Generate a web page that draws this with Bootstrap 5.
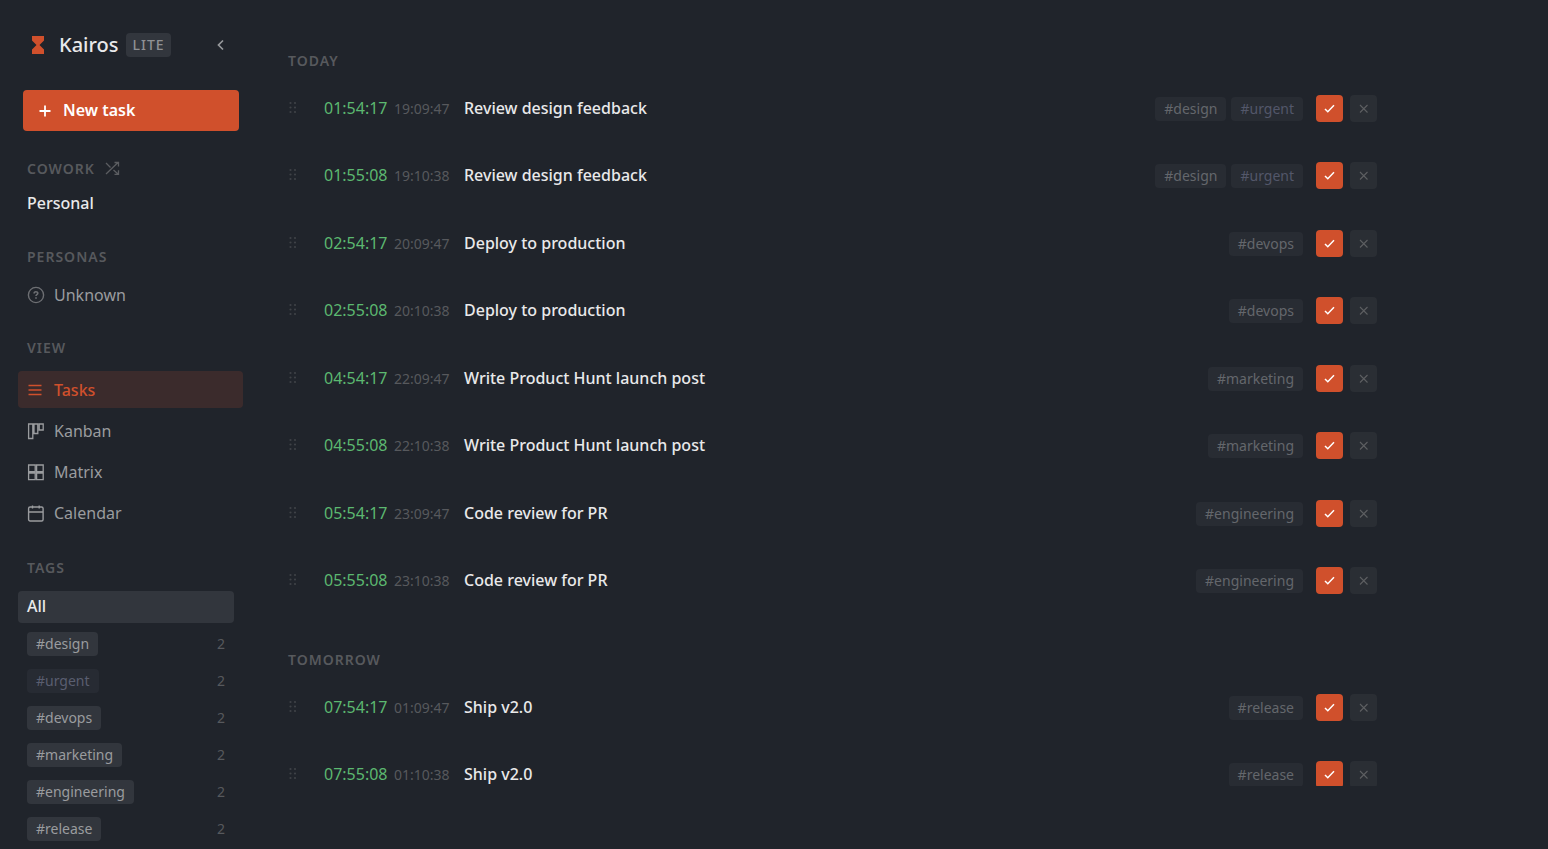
<!DOCTYPE html>
<html lang="en">
<head>
<meta charset="utf-8">
<meta name="viewport" content="width=device-width, initial-scale=1">
<title>Kairos</title>
<link href="https://cdn.jsdelivr.net/npm/bootstrap@5.3.0/dist/css/bootstrap.min.css" rel="stylesheet">
<style>
  :root { --bg:#20242b; --accent:#d0502c; --text:#e9e9ea; --soft:#9a9c9f; --dim:#57595d; --chip:#32363d; }
  body { background:var(--bg); color:var(--text); font-family:"Noto Sans",sans-serif; font-size:16px; line-height:22px; }
  .app { height:100vh; overflow:hidden; }
  .side { width:261px; padding:29px 18px 0; }
  .brand-row { height:32px; padding:0 9px 0 11px; }
  .brand-name { font-size:20px; font-weight:500; line-height:32px; margin:0 8px 0 12px; }
  .lite { background:var(--chip); color:#8f9194; font-size:14px; font-weight:500; line-height:24px; border-radius:4px; padding:0 6px; letter-spacing:1px; }
  .plain { background:none; border:0; padding:0; display:flex; color:inherit; }
  .collapse-btn { color:#97999c; margin-right:7px; }
  .new-task { background:var(--accent); color:#fff; border:0; border-radius:4px; height:41px; margin:29px 4px 28px 5px; padding:0 14px; gap:10px; }
  .new-task span { font-weight:600; padding-bottom:2px; }
  .caps { color:var(--dim); font-size:14px; line-height:20px; font-weight:600; letter-spacing:1px; margin:0; }
  .caps-row { padding:0 9px; margin-bottom:13px; gap:10px; }
  .side a { color:var(--soft); text-decoration:none; display:flex; align-items:center; border-radius:4px; padding:0 9px; }
  .side a.workspace { color:var(--text); font-weight:500; }
  .group { margin-bottom:28px; }
  .personas { padding-top:5px; }
  .side a.view-link { height:37px; gap:9px; margin-bottom:4px; }
  .side a.persona { height:30px; gap:9px; }
  .side a.active { background:#3b2b2c; color:var(--accent); font-weight:500; }
  .views { margin-bottom:27px; }
  .tag-list { margin-right:9px; }
  .side a.all-link { height:32px; background:var(--chip); color:var(--text); font-weight:500; margin-bottom:2px; padding-bottom:2px; }
  .side a.tag-link { height:37px; justify-content:space-between; }
  .chip { background:var(--chip); color:var(--soft); font-size:14px; line-height:24px; border-radius:4px; padding:0 9px; }
  .chip.low { background:#272b33; color:#5a5e70; }
  .count { color:var(--dim); font-size:14px; }
  .board { height:calc(100vh - 63px); overflow:hidden; padding:51px 171px 0 27px; min-width:0; }
  .board .caps { margin-bottom:4px; }
  .task { height:67px; padding-bottom:1px; }
  .tasks li:nth-child(even) { margin-bottom:1px; }
  .tasks { margin-bottom:36px; }
  .grip { width:36px; color:#3f4247; }
  .left { width:70px; color:#5cb870; }
  .at { width:70px; color:var(--dim); font-size:14px; padding-top:2px; }
  .task-name { font-weight:500; }
  .board .chip { background:#282c33; color:#64676c; margin-left:5px; margin-top:1px; }
  .board .chip.low { color:#53576a; }
  .sq { width:27px; height:27px; border:0; border-radius:4px; padding:0; display:flex; align-items:center; justify-content:center; }
  .done { background:var(--accent); color:#fff; margin-left:13px; }
  .drop { background:#2a2e34; color:#5d5f62; margin-left:7px; }
  svg { display:block; flex:none; }
</style>
</head>
<body>
<svg width="0" height="0" class="position-absolute" aria-hidden="true">
  <symbol id="i-grip" viewBox="0 0 10 14"><g fill="currentColor"><circle cx="2.500" cy="2" r="1.100"/><circle cx="7" cy="2" r="1.100"/><circle cx="2.500" cy="6.500" r="1.100"/><circle cx="7" cy="6.500" r="1.100"/><circle cx="2.500" cy="11" r="1.100"/><circle cx="7" cy="11" r="1.100"/></g></symbol>
  <symbol id="i-check" viewBox="0 0 13 13"><path d="M2 7l2.800 2.800L11 3.300" fill="none" stroke="currentColor" stroke-width="1.500"/></symbol>
  <symbol id="i-x" viewBox="0 0 13 13"><path d="M3 3l7.500 7.500M10.500 3L3 10.500" fill="none" stroke="currentColor" stroke-width="1.100"/></symbol>
</svg>
<div class="app d-flex">
  <nav class="side flex-shrink-0" aria-label="Sidebar">
    <div class="brand-row d-flex align-items-center">
      <svg width="18" height="18" viewBox="0 0 18 18" fill="#d0502c"><path d="M3 0h12v4.500L10.500 9l4.500 4.500V18H3v-4.500L7.500 9 3 4.500z"/></svg>
      <h1 class="brand-name">Kairos</h1>
      <span class="lite">LITE</span>
      <button type="button" class="plain collapse-btn ms-auto" aria-label="Collapse sidebar"><svg width="12" height="12" viewBox="0 0 12 12"><path d="M8 1.500L3.500 6 8 10.500" fill="none" stroke="currentColor" stroke-width="1.700"/></svg></button>
    </div>
    <div class="d-grid">
      <button type="button" class="new-task d-flex align-items-center"><svg width="16" height="16" viewBox="0 0 16 16"><path d="M8 2.500v11M2.500 8h11" stroke="#fff" stroke-width="1.800"/></svg><span>New task</span></button>
    </div>
    <div class="group">
      <div class="caps-row d-flex align-items-center"><h2 class="caps">COWORK</h2>
        <button type="button" class="plain" aria-label="Switch workspace"><svg width="15" height="18" viewBox="0 0 15 18"><path d="M1 14L13 2.500M9.500 2.500h4v4M1 3l4.500 4.500M8.500 10l4.500 4M9.500 14.300h4v-4" fill="none" stroke="#5b5d61" stroke-width="1.300"/></svg></button></div>
      <a href="#" class="workspace">Personal</a>
    </div>
    <div class="group personas">
      <div class="caps-row"><h2 class="caps">PERSONAS</h2></div>
      <a href="#" class="persona"><svg width="18" height="18" viewBox="0 0 18 18" fill="none" stroke="#6d6f73" stroke-width="1.400"><circle cx="9" cy="9" r="7.600"/><path d="M7.100 7.500c0-2.300 3.700-2.200 3.700-.2 0 1.400-1.800 1.300-1.800 2.600M9 11.200v1.500" stroke-width="1.600"/></svg>Unknown</a>
    </div>
    <div class="views">
      <div class="caps-row"><h2 class="caps">VIEW</h2></div>
      <a href="#" class="view-link active" aria-current="page"><svg width="18" height="18" viewBox="0 0 18 18"><path d="M1.500 4.500h13M1.500 9h13M1.500 13.500h13" stroke="currentColor" stroke-width="1.400"/></svg>Tasks</a>
      <a href="#" class="view-link"><svg width="18" height="18" viewBox="0 0 18 18" fill="none" stroke="currentColor" stroke-width="1.300"><path d="M1.600 2h4.200v14.500H1.600zM7 2h3.800v9.500H7zM12.200 2h4v6h-4z"/></svg>Kanban</a>
      <a href="#" class="view-link"><svg width="18" height="18" viewBox="0 0 18 18" fill="none" stroke="currentColor" stroke-width="1.300"><path d="M1.600 2h6.600v6.600H1.600zM9.600 2h6.600v6.600H9.600zM1.600 10h6.600v6.600H1.600zM9.600 10h6.600v6.600H9.600z"/></svg>Matrix</a>
      <a href="#" class="view-link"><svg width="18" height="18" viewBox="0 0 18 18" fill="none" stroke="currentColor" stroke-width="1.400"><rect x="1.600" y="3" width="14.500" height="14" rx="1.500"/><path d="M1.600 8H16M5.500 1.500v3M12.200 1.500v3"/></svg>Calendar</a>
    </div>
    <div class="tags-group">
      <div class="caps-row"><h2 class="caps">TAGS</h2></div>
      <div class="tag-list">
        <a href="#" class="all-link">All</a>
        <a href="#" class="tag-link"><span class="chip">#design</span><span class="count">2</span></a>
        <a href="#" class="tag-link"><span class="chip low">#urgent</span><span class="count">2</span></a>
        <a href="#" class="tag-link"><span class="chip">#devops</span><span class="count">2</span></a>
        <a href="#" class="tag-link"><span class="chip">#marketing</span><span class="count">2</span></a>
        <a href="#" class="tag-link"><span class="chip">#engineering</span><span class="count">2</span></a>
        <a href="#" class="tag-link"><span class="chip">#release</span><span class="count">2</span></a>
      </div>
    </div>
  </nav>
  <main class="board flex-grow-1">
    <h2 class="caps">TODAY</h2>
    <ul class="tasks list-unstyled">
      <li class="task d-flex align-items-center"><span class="grip"><svg width="10" height="14"><use href="#i-grip"/></svg></span><span class="left">01:54:17</span><span class="at">19:09:47</span><span class="task-name me-auto">Review design feedback</span><span class="chip">#design</span><span class="chip low">#urgent</span><button type="button" class="sq done" aria-label="Complete"><svg width="13" height="13"><use href="#i-check"/></svg></button><button type="button" class="sq drop" aria-label="Remove"><svg width="13" height="13"><use href="#i-x"/></svg></button></li>
      <li class="task d-flex align-items-center"><span class="grip"><svg width="10" height="14"><use href="#i-grip"/></svg></span><span class="left">01:55:08</span><span class="at">19:10:38</span><span class="task-name me-auto">Review design feedback</span><span class="chip">#design</span><span class="chip low">#urgent</span><button type="button" class="sq done" aria-label="Complete"><svg width="13" height="13"><use href="#i-check"/></svg></button><button type="button" class="sq drop" aria-label="Remove"><svg width="13" height="13"><use href="#i-x"/></svg></button></li>
      <li class="task d-flex align-items-center"><span class="grip"><svg width="10" height="14"><use href="#i-grip"/></svg></span><span class="left">02:54:17</span><span class="at">20:09:47</span><span class="task-name me-auto">Deploy to production</span><span class="chip">#devops</span><button type="button" class="sq done" aria-label="Complete"><svg width="13" height="13"><use href="#i-check"/></svg></button><button type="button" class="sq drop" aria-label="Remove"><svg width="13" height="13"><use href="#i-x"/></svg></button></li>
      <li class="task d-flex align-items-center"><span class="grip"><svg width="10" height="14"><use href="#i-grip"/></svg></span><span class="left">02:55:08</span><span class="at">20:10:38</span><span class="task-name me-auto">Deploy to production</span><span class="chip">#devops</span><button type="button" class="sq done" aria-label="Complete"><svg width="13" height="13"><use href="#i-check"/></svg></button><button type="button" class="sq drop" aria-label="Remove"><svg width="13" height="13"><use href="#i-x"/></svg></button></li>
      <li class="task d-flex align-items-center"><span class="grip"><svg width="10" height="14"><use href="#i-grip"/></svg></span><span class="left">04:54:17</span><span class="at">22:09:47</span><span class="task-name me-auto">Write Product Hunt launch post</span><span class="chip">#marketing</span><button type="button" class="sq done" aria-label="Complete"><svg width="13" height="13"><use href="#i-check"/></svg></button><button type="button" class="sq drop" aria-label="Remove"><svg width="13" height="13"><use href="#i-x"/></svg></button></li>
      <li class="task d-flex align-items-center"><span class="grip"><svg width="10" height="14"><use href="#i-grip"/></svg></span><span class="left">04:55:08</span><span class="at">22:10:38</span><span class="task-name me-auto">Write Product Hunt launch post</span><span class="chip">#marketing</span><button type="button" class="sq done" aria-label="Complete"><svg width="13" height="13"><use href="#i-check"/></svg></button><button type="button" class="sq drop" aria-label="Remove"><svg width="13" height="13"><use href="#i-x"/></svg></button></li>
      <li class="task d-flex align-items-center"><span class="grip"><svg width="10" height="14"><use href="#i-grip"/></svg></span><span class="left">05:54:17</span><span class="at">23:09:47</span><span class="task-name me-auto">Code review for PR</span><span class="chip">#engineering</span><button type="button" class="sq done" aria-label="Complete"><svg width="13" height="13"><use href="#i-check"/></svg></button><button type="button" class="sq drop" aria-label="Remove"><svg width="13" height="13"><use href="#i-x"/></svg></button></li>
      <li class="task d-flex align-items-center"><span class="grip"><svg width="10" height="14"><use href="#i-grip"/></svg></span><span class="left">05:55:08</span><span class="at">23:10:38</span><span class="task-name me-auto">Code review for PR</span><span class="chip">#engineering</span><button type="button" class="sq done" aria-label="Complete"><svg width="13" height="13"><use href="#i-check"/></svg></button><button type="button" class="sq drop" aria-label="Remove"><svg width="13" height="13"><use href="#i-x"/></svg></button></li>
    </ul>
    <h2 class="caps">TOMORROW</h2>
    <ul class="tasks list-unstyled">
      <li class="task d-flex align-items-center"><span class="grip"><svg width="10" height="14"><use href="#i-grip"/></svg></span><span class="left">07:54:17</span><span class="at">01:09:47</span><span class="task-name me-auto">Ship v2.0</span><span class="chip">#release</span><button type="button" class="sq done" aria-label="Complete"><svg width="13" height="13"><use href="#i-check"/></svg></button><button type="button" class="sq drop" aria-label="Remove"><svg width="13" height="13"><use href="#i-x"/></svg></button></li>
      <li class="task d-flex align-items-center"><span class="grip"><svg width="10" height="14"><use href="#i-grip"/></svg></span><span class="left">07:55:08</span><span class="at">01:10:38</span><span class="task-name me-auto">Ship v2.0</span><span class="chip">#release</span><button type="button" class="sq done" aria-label="Complete"><svg width="13" height="13"><use href="#i-check"/></svg></button><button type="button" class="sq drop" aria-label="Remove"><svg width="13" height="13"><use href="#i-x"/></svg></button></li>
    </ul>
  </main>
</div>
<script src="https://cdn.jsdelivr.net/npm/bootstrap@5.3.0/dist/js/bootstrap.bundle.min.js"></script>
</body>
</html>
